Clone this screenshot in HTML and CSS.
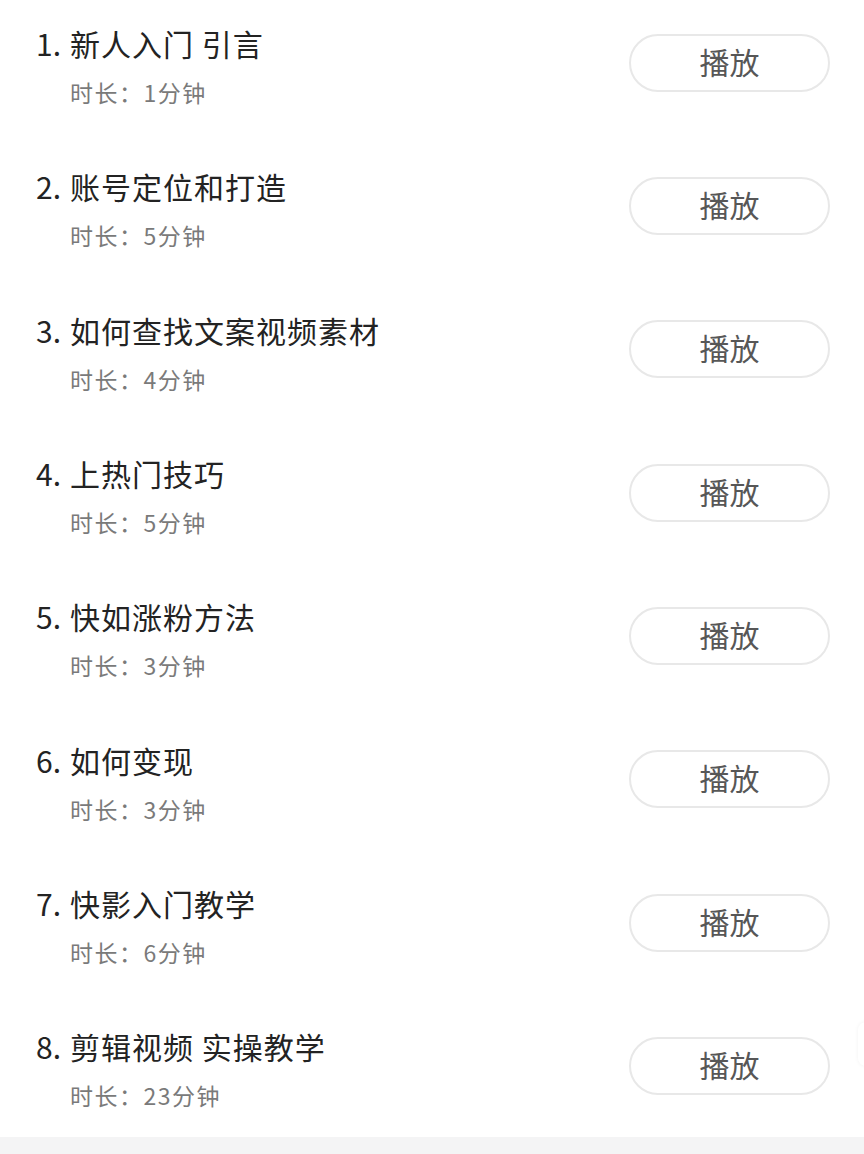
FILE: index.html
```html
<!DOCTYPE html>
<html lang="zh">
<head>
<meta charset="utf-8">
<title>课程列表</title>
<link rel="stylesheet" href="styles.css">
</head>
<body>
<div class="page">
  <ul class="list">
    <li class="row">
      <div class="info">
        <div class="title"><span class="num">1.</span>新人入门 引言</div>
        <div class="dur">时长：1分钟</div>
      </div>
      <button class="play">播放</button>
    </li>
    <li class="row">
      <div class="info">
        <div class="title"><span class="num">2.</span>账号定位和打造</div>
        <div class="dur">时长：5分钟</div>
      </div>
      <button class="play">播放</button>
    </li>
    <li class="row">
      <div class="info">
        <div class="title"><span class="num">3.</span>如何查找文案视频素材</div>
        <div class="dur">时长：4分钟</div>
      </div>
      <button class="play">播放</button>
    </li>
    <li class="row">
      <div class="info">
        <div class="title"><span class="num">4.</span>上热门技巧</div>
        <div class="dur">时长：5分钟</div>
      </div>
      <button class="play">播放</button>
    </li>
    <li class="row">
      <div class="info">
        <div class="title"><span class="num">5.</span>快如涨粉方法</div>
        <div class="dur">时长：3分钟</div>
      </div>
      <button class="play">播放</button>
    </li>
    <li class="row">
      <div class="info">
        <div class="title"><span class="num">6.</span>如何变现</div>
        <div class="dur">时长：3分钟</div>
      </div>
      <button class="play">播放</button>
    </li>
    <li class="row">
      <div class="info">
        <div class="title"><span class="num">7.</span>快影入门教学</div>
        <div class="dur">时长：6分钟</div>
      </div>
      <button class="play">播放</button>
    </li>
    <li class="row">
      <div class="info">
        <div class="title"><span class="num">8.</span>剪辑视频 实操教学</div>
        <div class="dur">时长：23分钟</div>
      </div>
      <button class="play">播放</button>
    </li>
  </ul>
  <div class="footer-strip"></div>
  <div class="edge-tab"></div>
</div>
</body>
</html>
```
FILE: styles.css
```css
html, body {
  margin: 0;
  padding: 0;
  background: #ffffff;
  overflow: hidden;
}
.page {
  position: relative;
  width: 864px;
  height: 1154px;
  overflow: hidden;
  font-family: "Noto Sans CJK SC", "Noto Sans", sans-serif;
}
.list {
  list-style: none;
  margin: -10px 0 0 0;
  padding: 0;
}
.row {
  height: 143.33px;
  box-sizing: border-box;
  display: flex;
  align-items: flex-start;
  justify-content: space-between;
  padding: 0 34px 0 36px;
}
.info {
  padding-top: 35px;
  display: flex;
  flex-direction: column;
}
.title {
  font-size: 30px;
  line-height: 36px;
  letter-spacing: 1px;
  color: #232323;
  white-space: nowrap;
}
.num {
  display: inline-block;
  width: 34px;
  letter-spacing: 0;
}
.dur {
  margin-top: 16px;
  padding-left: 34px;
  font-size: 23px;
  line-height: 30px;
  letter-spacing: 1.5px;
  color: #7a7a7a;
}
.play {
  align-self: center;
  margin-top: 2px;
  width: 201px;
  height: 58px;
  box-sizing: border-box;
  border: 2px solid #e8e8e8;
  border-radius: 29px;
  background: #ffffff;
  font-family: "Noto Sans CJK SC", "Noto Sans", sans-serif;
  font-size: 30px;
  color: #575757;
  padding: 0 0 4px 0;
  line-height: 50px;
}
.footer-strip {
  position: absolute;
  left: 0;
  right: 0;
  top: 1137px;
  bottom: 0;
  background: #f4f4f5;
}
.edge-tab {
  position: absolute;
  left: 858px;
  top: 1022px;
  width: 20px;
  height: 44px;
  border-radius: 8px;
  background: #ffffff;
  box-shadow: 0 0 4px rgba(0, 0, 0, 0.05);
}
```
